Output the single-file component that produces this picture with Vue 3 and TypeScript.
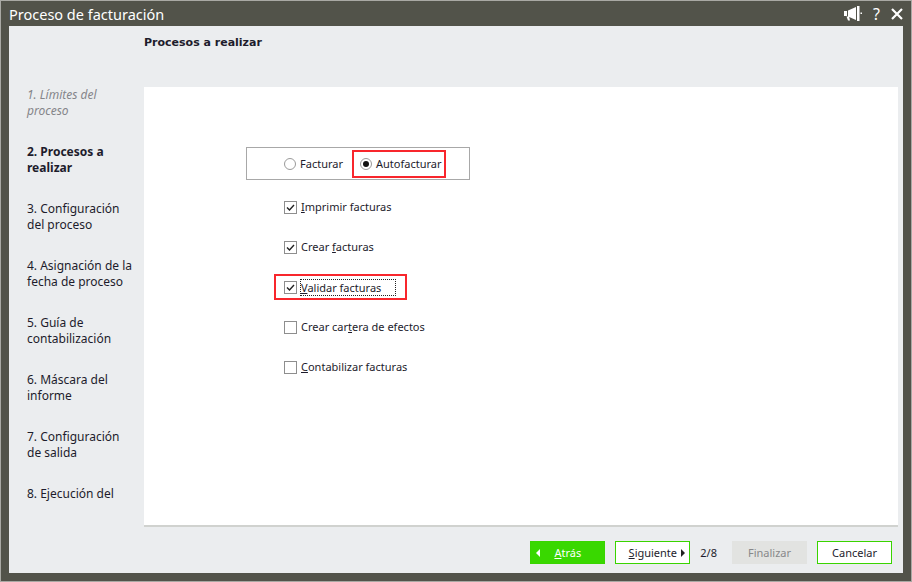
<script setup lang="ts">
const steps: { text: string[]; cls?: string }[] = [
  { text: ['1. Límites del', 'proceso'], cls: 'done' },
  { text: ['2. Procesos a', 'realizar'], cls: 'current' },
  { text: ['3. Configuración', 'del proceso'] },
  { text: ['4. Asignación de la', 'fecha de proceso'] },
  { text: ['5. Guía de', 'contabilización'] },
  { text: ['6. Máscara del', 'informe'] },
  { text: ['7. Configuración', 'de salida'] },
  { text: ['8. Ejecución del', 'proceso'] },
]
</script>

<template>
  <div class="window">
    <header class="titlebar">
      <span class="title">Proceso de facturación</span>
      <div class="tools">
        <svg width="18" height="16" viewBox="0 0 18 16" fill="#fff">
          <path d="M0 5h3v5H0zM4 4.500 12 1v13L4 10.500zM13 0h2.500v15H13zM16.500 6.500H18v1.500h-1.500zM2.500 10.500h2.500l1 4H4z" />
        </svg>
        <span class="help">?</span>
        <svg width="12" height="12" viewBox="0 0 12 12" stroke="#fff" stroke-width="2.200" fill="none">
          <path d="M1 1l10 10M11 1L1 11" />
        </svg>
      </div>
    </header>
    <div class="client">
      <div class="heading">Procesos a realizar</div>
      <div class="middle">
        <nav class="steps">
          <div v-for="s in steps" :key="s.text[0]" class="step" :class="s.cls">
            <div v-for="l in s.text" :key="l">{{ l }}</div>
          </div>
        </nav>
        <main class="panel">
          <div class="radios">
            <label class="radio"><span class="dot"></span>Facturar</label>
            <label class="radio marked"><span class="dot on"></span>Autofacturar</label>
          </div>
          <div class="checks">
            <div class="check">
              <span class="box on"><svg width="11" height="11" viewBox="0 0 11 11"><path d="M2 5.500l2.500 2.500L9 3" fill="none" stroke="#222" stroke-width="1.400"/></svg></span>
              <span><u>I</u>mprimir facturas</span>
            </div>
            <div class="check">
              <span class="box on"><svg width="11" height="11" viewBox="0 0 11 11"><path d="M2 5.500l2.500 2.500L9 3" fill="none" stroke="#222" stroke-width="1.400"/></svg></span>
              <span>Crear <u>f</u>acturas</span>
            </div>
            <div class="check marked-check">
              <span class="box on"><svg width="11" height="11" viewBox="0 0 11 11"><path d="M2 5.500l2.500 2.500L9 3" fill="none" stroke="#222" stroke-width="1.400"/></svg></span>
              <span class="focus"><u>V</u>alidar facturas</span>
            </div>
            <div class="check">
              <span class="box"></span>
              <span>Crear car<u>t</u>era de efectos</span>
            </div>
            <div class="check">
              <span class="box"></span>
              <span><u>C</u>ontabilizar facturas</span>
            </div>
          </div>
        </main>
      </div>
      <footer class="footer">
        <button class="btn primary"><i class="arrow left"></i><span><u>A</u>trás</span></button>
        <button class="btn next"><span><u>S</u>iguiente</span><i class="arrow right"></i></button>
        <span class="count">2/8</span>
        <button class="btn disabled">Finalizar</button>
        <button class="btn cancel">Cancelar</button>
      </footer>
    </div>
  </div>
</template>

<style>
html, body { margin: 0; padding: 0; background: #fff; }
</style>

<style scoped>
.window {
  box-sizing: border-box;
  width: 912px;
  height: 582px;
  display: flex;
  flex-direction: column;
  background: #52534a;
  border: 1px solid #a9a9a4;
  padding: 0 8px 8px 8px;
  font-family: "Noto Sans", "DejaVu Sans", sans-serif;
  font-size: 11px;
  color: #1d1c2c;
}
.titlebar {
  height: 25px;
  flex: none;
  display: flex;
  align-items: center;
  justify-content: space-between;
}
.title { color: #fff; font-size: 14.500px; }
.tools { display: flex; align-items: center; gap: 11px; color: #fff; padding-right: 0; }
.help { font-size: 16px; line-height: 16px; }
.client {
  flex: 1;
  min-height: 0;
  display: flex;
  flex-direction: column;
  background: #ebedef;
}
.heading {
  height: 61px;
  flex: none;
  box-sizing: border-box;
  padding: 10px 0 0 135px;
  font-family: "DejaVu Sans", sans-serif;
  font-weight: 700;
  font-size: 11px;
  line-height: 14px;
}
.middle { flex: 1; min-height: 0; display: flex; }
.steps {
  width: 135px;
  flex: none;
  box-sizing: border-box;
  padding: 0 0 0 18px;
  height: 415px;
  overflow: hidden;
  font-size: 12px;
  line-height: 16px;
}
.step { height: 41px; margin-bottom: 16px; white-space: nowrap; }
.step.done { color: #85858a; font-style: italic; }
.step.current { font-weight: 700; }
.panel {
  flex: 1;
  background: #fff;
  margin-right: 5px;
  box-sizing: border-box;
  padding: 60px 0 0 102px;
  border-bottom: 2px solid #d0d2cf;
  height: 440px;
}
.radios {
  box-sizing: border-box;
  width: 224px;
  height: 33px;
  border: 1px solid #a8a8a8;
  display: flex;
  align-items: center;
  padding-left: 37px;
}
.radio { display: flex; align-items: center; gap: 4px; }
.radio.marked {
  box-sizing: border-box;
  height: 28px;
  width: 94px;
  border: 2px solid #f8262c;
  margin-left: 9px;
  padding-left: 6px;
}
.dot {
  box-sizing: border-box;
  width: 12px;
  height: 12px;
  border: 1px solid #9a9a9a;
  border-radius: 50%;
  display: inline-flex;
  align-items: center;
  justify-content: center;
  background: #fff;
}
.dot.on::after {
  content: "";
  width: 6px;
  height: 6px;
  border-radius: 50%;
  background: #111;
}
.checks { padding: 20px 0 0 38px; display: flex; flex-direction: column; gap: 26px; }
.check { display: flex; align-items: center; gap: 4px; height: 14px; line-height: 14px; }
.check u { text-decoration-thickness: 1px; }
.box {
  box-sizing: border-box;
  width: 13px;
  height: 13px;
  border: 1px solid #8e8e8e;
  display: inline-flex;
  align-items: center;
  justify-content: center;
  background: #fff;
}
.marked-check { position: relative; }
.marked-check::before {
  content: "";
  position: absolute;
  left: -10px;
  top: -6px;
  width: 133px;
  height: 26px;
  box-sizing: border-box;
  border: 2px solid #f8262c;
}
.focus { outline: 1px dotted #222; width: 94px; line-height: 15px; }
.footer {
  height: 46px;
  flex: none;
  display: flex;
  align-items: flex-start;
  padding: 14px 11px 0 0;
  box-sizing: border-box;
  justify-content: flex-end;
  gap: 10px;
}
.btn {
  box-sizing: border-box;
  width: 75px;
  height: 23px;
  padding: 0;
  background: #fff;
  border: 1px solid #39d400;
  font: inherit;
  color: #1d1c2c;
  position: relative;
}
.btn.primary { background: #39d800; color: #fff; }
.btn.disabled { background: #e2e3e1; border-color: #e2e3e1; color: #87888a; }
.btn.next { margin-right: 0; }
.count { line-height: 23px; margin-right: 5px; }
.arrow { position: absolute; top: 7px; width: 0; height: 0; border-top: 4px solid transparent; border-bottom: 4px solid transparent; }
.arrow.left { left: 5px; border-right: 4px solid #fff; }
.arrow.right { right: 4px; border-left: 4px solid #222; }
</style>
